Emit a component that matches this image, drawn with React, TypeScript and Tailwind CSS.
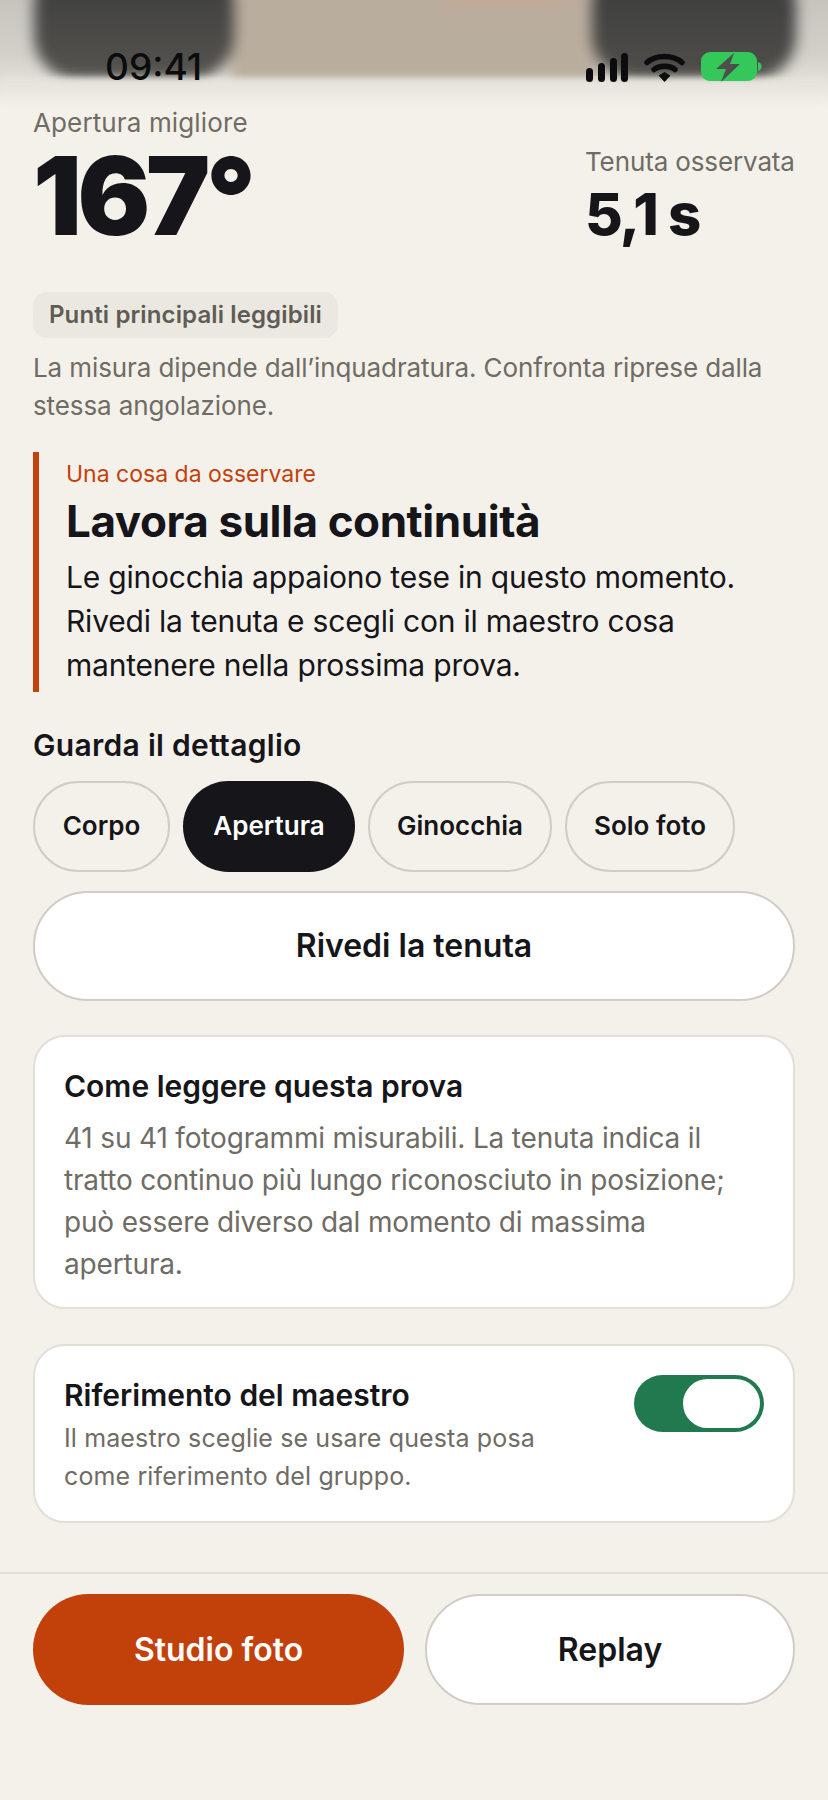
const sans = { fontFamily: 'Inter, sans-serif' };

const chips = [
  { label: 'Corpo', width: 'w-[137px]', active: false },
  { label: 'Apertura', width: 'w-[172px]', active: true },
  { label: 'Ginocchia', width: 'w-[184px]', active: false },
  { label: 'Solo foto', width: 'w-[170px]', active: false },
];

function StatusIcons() {
  return (
    <svg width="176" height="30" viewBox="0 0 176 30" fill="none">
      <rect x="0" y="16" width="7" height="14" rx="3.5" fill="#0c0c0e" />
      <rect x="12" y="11" width="7" height="19" rx="3.5" fill="#0c0c0e" />
      <rect x="24" y="6" width="7" height="24" rx="3.5" fill="#0c0c0e" />
      <rect x="35" y="1" width="7" height="29" rx="3.5" fill="#0c0c0e" />
      <path d="M61 10.5C70 2.5 87 2.5 96 10.5" stroke="#0c0c0e" strokeWidth="5.5" strokeLinecap="round" />
      <path d="M68 17.5C73 13 84 13 89 17.5" stroke="#0c0c0e" strokeWidth="5.5" strokeLinecap="round" />
      <path d="M72.5 23.5L78.5 20L84.5 23.5L78.5 30Z" fill="#0c0c0e" />
      <rect x="115" y="0" width="56" height="29" rx="9" fill="#34c759" />
      <path d="M172 10C174.5 10.5 175.5 12.5 175.5 14.5C175.5 16.5 174.5 18.5 172 19Z" fill="#34c759" />
      <path d="M148 1L130 17H140L135 30L154 12H144Z" fill="#4d4f4c" />
    </svg>
  );
}

export default function App() {
  return (
    <div className="w-[828px] h-[1800px] bg-[#f4f1ea] text-[#15151a] overflow-hidden" style={sans}>
      <div className="relative h-[108px] overflow-hidden bg-gradient-to-b from-[#c6c4bd] via-[#d2d0c9] to-[#f4f1ea]">
        <div className="absolute inset-0 bottom-[28px] blur-[7px]">
          <div className="absolute left-[230px] right-[230px] top-[-20px] bottom-[-4px] bg-[#b9ad9e]" />
          <div className="absolute left-[440px] top-[-12px] w-[130px] h-[20px] rounded-full bg-[#c2aa98]" />
          <div className="absolute left-[34px] top-[-40px] w-[200px] h-[120px] rounded-[44px] bg-gradient-to-b from-[#3a3a3a] to-[#55544f]" />
          <div className="absolute left-[592px] top-[-40px] w-[204px] h-[120px] rounded-[44px] bg-gradient-to-b from-[#3a3a3a] to-[#4f4e4a]" />
        </div>
        <div className="absolute left-0 right-0 top-[78px] bottom-0 bg-gradient-to-b from-[#e4e1da] to-[#f4f1ea] blur-[3px]" />
        <div className="relative flex items-start justify-between pt-[52px] pl-[105px] pr-[66px]">
          <span className="text-[37px] leading-[30px] font-medium text-[#0c0c0e]">09:41</span>
          <StatusIcons />
        </div>
      </div>

      <div className="px-[33px]">
        <div className="flex justify-between">
          <div>
            <p className="text-[26px] leading-[30px] text-[#6f6b65] tracking-[0.005em]">Apertura migliore</p>
            <p className="text-[108px] leading-[94px] font-black tracking-[-0.04em] mt-[11px]">167°</p>
          </div>
          <div className="w-[210px] pt-[39px]">
            <p className="text-[26px] leading-[30px] text-[#6f6b65] whitespace-nowrap tracking-[-0.005em]">Tenuta osservata</p>
            <p className="text-[58px] leading-[58px] font-extrabold tracking-[-0.03em] mt-[8px]">5,1 s</p>
          </div>
        </div>

        <span className="inline-block mt-[49px] rounded-[14px] bg-[#ebe8e1] px-[16px] text-[24px] leading-[46px] font-semibold text-[#5f5b55] tracking-[0.005em]">
          Punti principali leggibili
        </span>
        <p className="mt-[11px] text-[26px] leading-[38px] text-[#6f6b65] tracking-[-0.004em]">
          La misura dipende dall’inquadratura. Confronta riprese dalla stessa angolazione.
        </p>

        <div className="mt-[27px] h-[240px] border-l-[6px] border-[#c2410c] pl-[27px] pt-[7px]">
          <p className="text-[23px] leading-[30px] text-[#c2410c]">Una cosa da osservare</p>
          <h2 className="mt-[6px] text-[44px] leading-[52px] font-bold tracking-[-0.01em]">Lavora sulla continuità</h2>
          <p className="mt-[8px] text-[30px] leading-[44px] tracking-[-0.007em]">
            Le ginocchia appaiono tese in questo momento. Rivedi la tenuta e scegli con il maestro cosa mantenere nella prossima prova.
          </p>
        </div>

        <h3 className="mt-[36px] text-[30px] leading-[34px] font-semibold tracking-[0.01em]">Guarda il dettaglio</h3>
        <div className="mt-[19px] flex gap-[13px]">
          {chips.map((chip) => (
            <div
              key={chip.label}
              className={
                chip.active
                  ? `${chip.width} h-[91px] rounded-full bg-[#15151a] text-white flex items-center justify-center text-[26px] leading-[36px] font-semibold pb-[2px]`
                  : `${chip.width} h-[91px] rounded-full border-2 border-[#d2cdc4] flex items-center justify-center text-[26px] leading-[36px] font-semibold pb-[2px]`
              }
            >
              {chip.label}
            </div>
          ))}
        </div>
        <div className="mt-[19px] h-[110px] rounded-full border-2 border-[#d2cdc4] bg-white flex items-center justify-center text-[32px] font-semibold">
          Rivedi la tenuta
        </div>

        <div className="mt-[34px] h-[274px] rounded-[32px] border-2 border-[#e3dfd7] bg-white px-[29px] pt-[30px]">
          <h3 className="text-[30px] leading-[38px] font-semibold">Come leggere questa prova</h3>
          <p className="mt-[12px] text-[28px] leading-[42px] text-[#6f6b65] tracking-[-0.006em]">
            41 su 41 fotogrammi misurabili. La tenuta indica il tratto continuo più lungo riconosciuto in posizione; può essere diverso dal momento di massima apertura.
          </p>
        </div>

        <div className="mt-[35px] h-[179px] rounded-[32px] border-2 border-[#e3dfd7] bg-white pl-[29px] pr-[29px] pt-[29px] flex justify-between">
          <div className="w-[500px] pt-[1px]">
            <h3 className="text-[30px] leading-[38px] font-semibold">Riferimento del maestro</h3>
            <p className="mt-[5px] text-[25px] leading-[38px] text-[#6f6b65] tracking-[0.005em]">
              Il maestro sceglie se usare questa posa come riferimento del gruppo.
            </p>
          </div>
          <div className="w-[130px] h-[57px] rounded-full bg-[#217a4f] p-[4px] flex justify-end">
            <div className="w-[77px] h-[49px] rounded-full bg-white" />
          </div>
        </div>
      </div>

      <div className="mt-[49px] border-t-2 border-[#e3dfd7] px-[33px] pt-[20px] flex gap-[21px]">
        <div className="w-[371px] h-[111px] rounded-full bg-[#c2410a] text-white flex items-center justify-center text-[32px] font-semibold">
          Studio foto
        </div>
        <div className="w-[370px] h-[111px] rounded-full border-2 border-[#d2cdc4] bg-white flex items-center justify-center text-[32px] font-semibold">
          Replay
        </div>
      </div>
    </div>
  );
}
